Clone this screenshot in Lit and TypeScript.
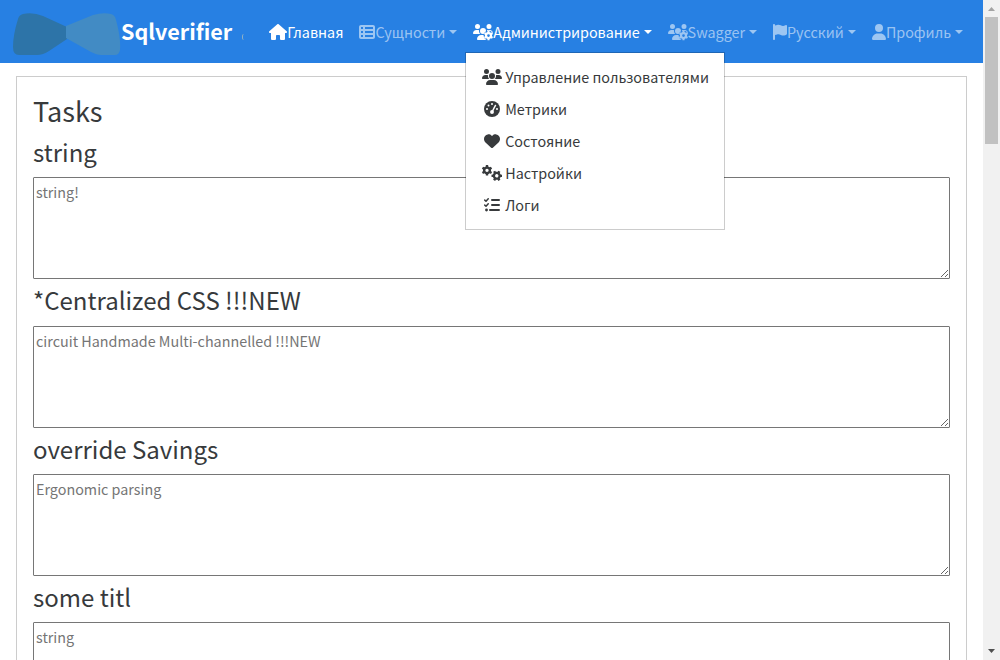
import { LitElement, html, css, svg } from 'lit';

// Outline of a six-toothed gear with a round hole, centred on (cx, cy).
function gear(cx: number, cy: number, r: number, hole: number): string {
  const pts: string[] = [];
  for (let i = 0; i < 6; i++) {
    const base = (i * Math.PI) / 3 - Math.PI / 2;
    for (const [da, k] of [[-0.3, 0.76], [-0.22, 1], [0.22, 1], [0.3, 0.76]]) {
      const a = base + da;
      pts.push(`${(cx + Math.cos(a) * r * k).toFixed(1)} ${(cy + Math.sin(a) * r * k).toFixed(1)}`);
    }
  }
  return `M${pts.join('L')}ZM${cx - hole} ${cy}a${hole} ${hole} 0 1 0 ${2 * hole} 0a${hole} ${hole} 0 1 0 ${-2 * hole} 0Z`;
}

const USERS =
  'M144 160A80 80 0 1 0 144 0a80 80 0 1 0 0 160zm368 0A80 80 0 1 0 512 0a80 80 0 1 0 0 160zM0 298.7C0 310.4 9.6 320 21.3 320H234.7c.2 0 .4 0 .7 0c-26.6-23.5-43.3-57.8-43.3-96c0-7.6 .7-15 1.9-22.3c-13.6-6.3-28.7-9.7-44.6-9.7H106.7C47.8 192 0 239.8 0 298.7zM405.3 320H618.7c11.8 0 21.3-9.6 21.3-21.3C640 239.8 592.2 192 533.3 192H490.7c-15.9 0-31 3.5-44.6 9.7c1.3 7.2 1.9 14.7 1.9 22.3c0 38.2-16.8 72.5-43.3 96c.2 0 .4 0 .7 0zM320 320a96 96 0 1 0 0-192 96 96 0 1 0 0 192zM261.3 352C187.7 352 128 411.7 128 485.3c0 14.7 11.9 26.7 26.7 26.7H485.3c14.7 0 26.7-11.9 26.7-26.7C512 411.7 452.3 352 378.7 352H261.3z';

const ICONS: Record<string, { w: number; body: unknown }> = {
  home: {
    w: 576,
    body: svg`<path d="M575.8 255.5c0 18-15 32.1-32 32.1h-32l.7 160.2c0 2.7-.2 5.4-.5 8.1V472c0 22.1-17.9 40-40 40H456c-1.1 0-2.2 0-3.3-.1c-1.4 .1-2.8 .1-4.2 .1H416 392c-22.1 0-40-17.9-40-40V448 384c0-17.7-14.3-32-32-32H256c-17.7 0-32 14.3-32 32v64 24c0 22.1-17.9 40-40 40H160 128.1c-1.5 0-3-.1-4.5-.2c-1.2 .1-2.4 .2-3.6 .2H104c-22.1 0-40-17.9-40-40V360c0-.9 0-1.9 .1-2.8V287.6H32c-18 0-32-14-32-32.1c0-9 3-17 10-24L266.4 8c7-7 15-8 22-8s15 2 21 7L564.8 231.5c8 7 12 15 11 24z"/>`,
  },
  list: {
    w: 512,
    body: svg`<path fill-rule="evenodd" d="M0 96C0 60.7 28.7 32 64 32H448c35.3 0 64 28.7 64 64V416c0 35.3-28.7 64-64 64H64c-35.3 0-64-28.7-64-64V96zm64 0v64h64V96H64zm384 0H192v64H448V96zM64 224v64h64V224H64zm384 0H192v64H448V224zM64 352v64h64V352H64zm384 0H192v64H448V352z"/>`,
  },
  users: { w: 640, body: svg`<path d=${USERS}/>` },
  usersGear: {
    w: 640,
    body: svg`<path d=${USERS}/><circle cx="496" cy="368" r="156" fill="#2780e3"/><path fill-rule="evenodd" d=${gear(496, 368, 152, 44)}/>`,
  },
  flag: {
    w: 448,
    body: svg`<path d="M64 32C64 14.3 49.7 0 32 0S0 14.3 0 32V64 368 480c0 17.7 14.3 32 32 32s32-14.3 32-32V352l64.3-16.1c41.1-10.3 84.6-5.5 122.5 13.4c44.2 22.1 95.5 24.8 141.7 7.4l34.7-13c12.5-4.7 20.8-16.6 20.8-30V66.1c0-23-24.2-38-44.8-27.7l-9.6 4.8c-46.3 23.2-100.8 23.2-147.1 0c-35.1-17.6-75.4-22-113.5-12.5L64 48V32z"/>`,
  },
  user: {
    w: 448,
    body: svg`<path d="M224 256A128 128 0 1 0 224 0a128 128 0 1 0 0 256zm-45.7 48C79.8 304 0 383.8 0 482.3C0 498.7 13.3 512 29.7 512H418.3c16.4 0 29.7-13.3 29.7-29.7C448 383.8 368.2 304 269.7 304H178.3z"/>`,
  },
  gauge: {
    w: 512,
    body: svg`<circle cx="256" cy="256" r="256"/><g fill="#fff"><circle cx="256" cy="96" r="32"/><circle cx="144" cy="144" r="32"/><circle cx="96" cy="256" r="32"/><circle cx="416" cy="256" r="32"/><circle cx="256" cy="352" r="62"/></g><path d="M256 352L367 143" stroke="#fff" stroke-width="48" stroke-linecap="round"/>`,
  },
  heart: {
    w: 512,
    body: svg`<path d="M47.6 300.4L228.3 469.1c7.5 7 17.4 10.9 27.7 10.9s20.2-3.9 27.7-10.9L464.4 300.4c30.4-28.3 47.6-68 47.6-109.5v-5.8c0-69.9-50.5-129.5-119.4-141C347 36.5 300.6 51.4 268 84L256 96 244 84c-32.6-32.6-79-47.5-124.6-39.9C50.5 55.6 0 115.2 0 185.1v5.8c0 41.5 17.2 81.2 47.6 109.5z"/>`,
  },
  cogs: {
    w: 640,
    body: svg`<path fill-rule="evenodd" d=${gear(160, 170, 172, 54)}/><path fill-rule="evenodd" transform="rotate(30 472 346)" d=${gear(472, 346, 172, 54)}/>`,
  },
  tasks: {
    w: 512,
    body: svg`<g fill="none" stroke="currentColor" stroke-linecap="round" stroke-linejoin="round"><path stroke-width="48" d="M24 100l40 36 72-80M24 260l40 36 72-80"/><path stroke-width="64" d="M256 96H480M256 256H480M192 416H480"/></g><circle cx="80" cy="416" r="46"/>`,
  },
};

class UiIcon extends LitElement {
  static properties = { name: {} };
  declare name: string;
  static styles = css`
    :host { display: inline-flex; justify-content: center; flex: none; }
    svg { height: 16px; display: block; fill: currentColor; overflow: visible; }
  `;
  render() {
    const i = ICONS[this.name];
    return html`<svg viewBox="0 0 ${i.w} 512" width=${i.w / 32} height="16">${i.body}</svg>`;
  }
}
customElements.define('ui-icon', UiIcon);

const NAV = [
  { icon: 'home', label: 'Главная', bright: true, caret: false },
  { icon: 'list', label: 'Сущности', bright: false, caret: true },
  { icon: 'usersGear', label: 'Администрирование', bright: true, caret: true, menu: true },
  { icon: 'usersGear', label: 'Swagger', bright: false, caret: true },
  { icon: 'flag', label: 'Русский', bright: false, caret: true },
  { icon: 'user', label: 'Профиль', bright: false, caret: true },
];

const MENU = [
  ['users', 'Управление пользователями'],
  ['gauge', 'Метрики'],
  ['heart', 'Состояние'],
  ['cogs', 'Настройки'],
  ['tasks', 'Логи'],
];

const TASKS = [
  ['string', 'string!'],
  ['*Centralized CSS !!!NEW', 'circuit Handmade Multi-channelled !!!NEW'],
  ['override Savings', 'Ergonomic parsing'],
  ['some titl', 'string'],
];

class AppRoot extends LitElement {
  static styles = css`
    :host {
      display: flex; height: 660px; overflow: hidden; background: #fff; color: #373a3c;
      font: 14.35px/24px 'Source Sans Pro', 'Noto Sans CJK SC', sans-serif;
    }
    * { box-sizing: border-box; }
    .page { flex: 1; min-width: 0; height: 660px; overflow: hidden; }
    .navbar {
      display: flex; align-items: center; height: 63px; padding: 0 12px 0 13px;
      background: #2780e3; color: #fff; white-space: nowrap;
    }
    .brand { display: flex; align-items: center; height: 63px; }
    .logo { width: 108px; height: 42px; display: block; margin-top: 5px; }
    .title { font-size: 21.55px; font-weight: 700; margin-bottom: 2px; }
    .version { width: 2px; height: 6px; margin: 10px 0 0 10px; border-left: 1px solid #8fb0c4; border-radius: 3px 0 0 3px; }
    .nav { display: flex; margin-left: auto; }
    .item { position: relative; display: flex; align-items: center; padding: 8px; height: 40px; color: rgba(255, 255, 255, 0.55); }
    .item.bright { color: #fff; }
    .item.open > span { letter-spacing: -0.045px; }
    .caret { margin: 0 0 0 4px; border: 4px solid transparent; border-top-color: currentColor; border-bottom: 0; }
    .menu {
      position: absolute; top: 40px; left: 0; z-index: 5; width: 260px; padding: 8px 0;
      background: #fff; color: #373a3c; border: 1px solid rgba(0, 0, 0, 0.2); background-clip: padding-box;
    }
    .entry { display: flex; align-items: center; height: 32px; padding: 0 16px; gap: 3px; }
    .entry ui-icon { width: 20px; }
    .card { margin: 13px 16px 0; padding: 16px; border: 1px solid #ccc; height: 700px; }
    h2, h3 { margin: 0; font-weight: 400; }
    h2 { font-size: 27.05px; line-height: 36.24px; margin-bottom: 6.7px; }
    h3 { font-size: 24px; line-height: 32.16px; margin-bottom: 9.3px; }
    textarea {
      display: block; width: 100%; height: 102px; margin: 0 0 4.9px; padding: 2px; border: 1px solid #767676;
      border-radius: 1px; font: inherit; background: #fff; resize: both;
    }
    textarea::placeholder { color: #757575; }
    .scrollbar {
      width: 17px; flex: none; background: #f1f1f1; display: flex; flex-direction: column;
      align-items: center; justify-content: space-between;
    }
    .thumb { width: 13px; height: 127px; background: #c1c1c1; margin-bottom: auto; }
    .arrow { width: 17px; height: 17px; display: block; }
  `;
  render() {
    return html`
      <div class="page">
        <header class="navbar">
          <div class="brand">
            <svg class="logo" viewBox="0 0 108 42">
              <path fill="#2d74a8" d="M5 6Q6 2 10 1Q20-1 30 3L54 14V26L36 38Q30 42 24 42H6Q0 42 0 34Q0 22 5 6Z" />
              <path fill="#428bc4" d="M53 13L80 2Q90-1 98 1Q102 2 103 7Q108 25 107 37Q106 42 102 42H88Q84 42 78 39L53 25Z" />
            </svg>
            <span class="title">Sqlverifier</span>
            <span class="version"></span>
          </div>
          <nav class="nav">
            ${NAV.map(
              (n) => html`<div class="item ${n.bright ? 'bright' : ''} ${n.menu ? 'open' : ''}">
                <ui-icon .name=${n.icon}></ui-icon><span>${n.label}</span>
                ${n.caret ? html`<i class="caret"></i>` : ''}
                ${n.menu
                  ? html`<div class="menu">
                      ${MENU.map(([icon, label]) => html`<div class="entry"><ui-icon .name=${icon}></ui-icon><span>${label}</span></div>`)}
                    </div>`
                  : ''}
              </div>`
            )}
          </nav>
        </header>
        <main class="card">
          <h2>Tasks</h2>
          ${TASKS.map(([title, hint]) => html`<h3>${title}</h3><textarea placeholder=${hint}></textarea>`)}
        </main>
      </div>
      <div class="scrollbar">
        <svg class="arrow" viewBox="0 0 17 17"><path d="M5 11L8.5 7L12 11Z" fill="#a3a3a3" /></svg>
        <div class="thumb"></div>
        <svg class="arrow" viewBox="0 0 17 17"><path d="M5 6L8.5 10L12 6Z" fill="#505050" /></svg>
      </div>
    `;
  }
}
customElements.define('app-root', AppRoot);
